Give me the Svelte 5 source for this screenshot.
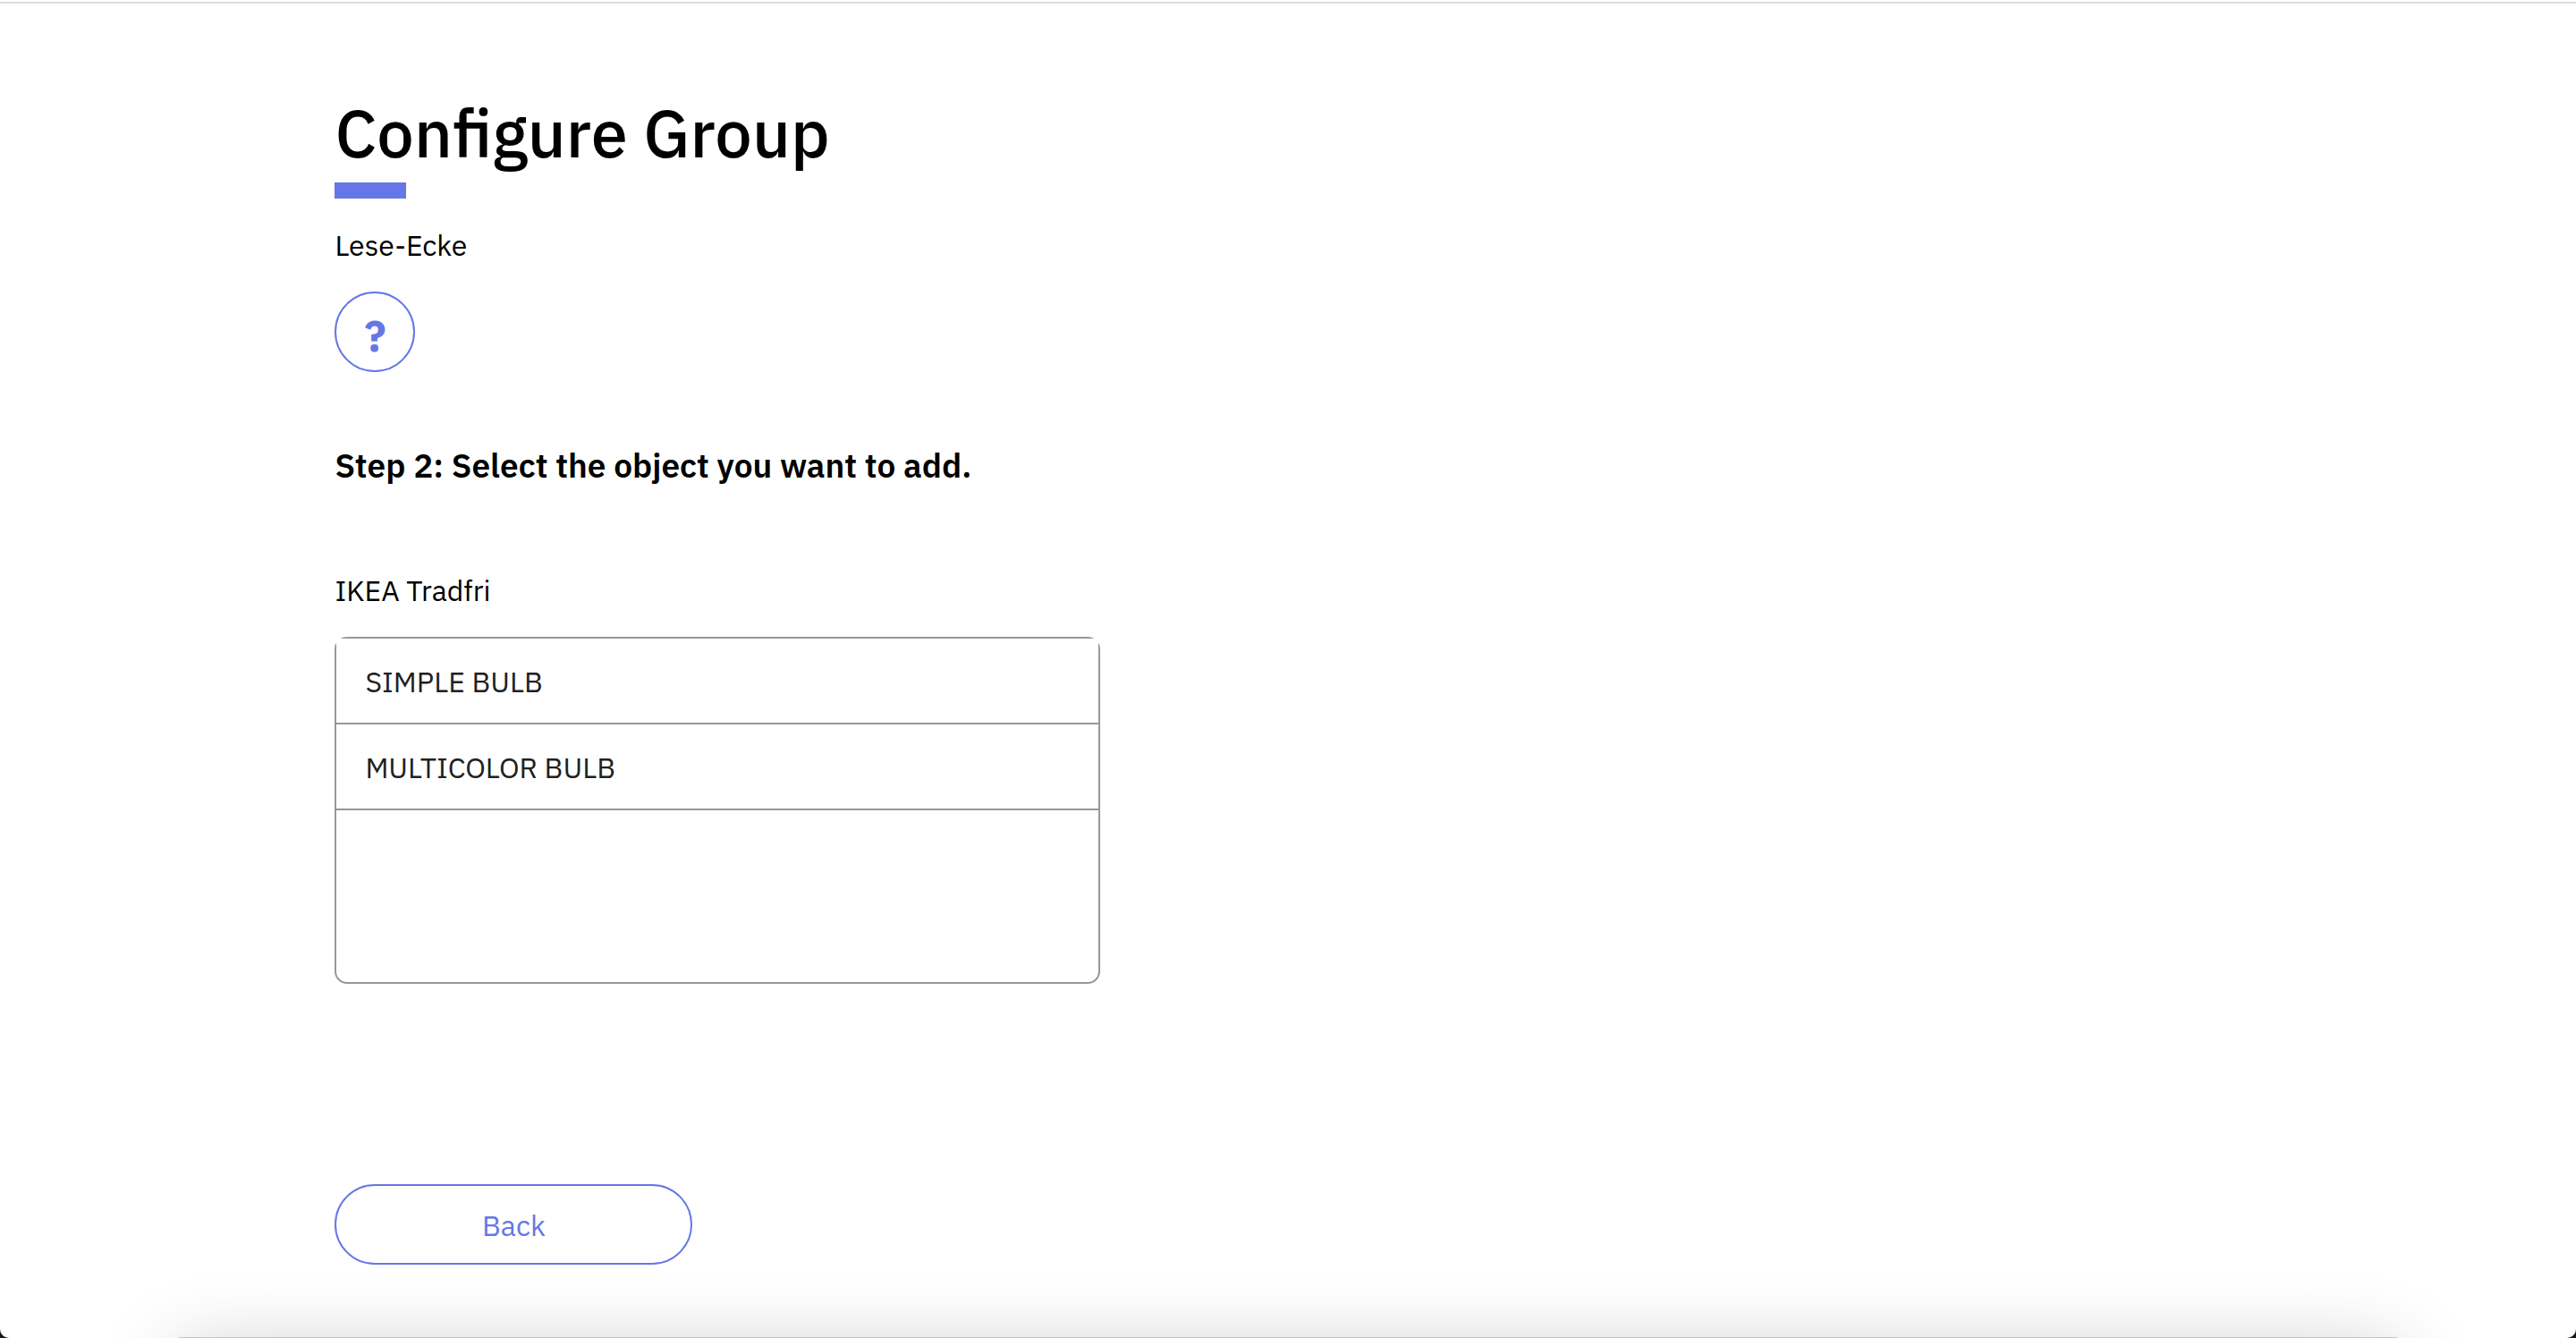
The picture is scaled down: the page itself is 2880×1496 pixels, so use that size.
<script>
  const group = 'Lese-Ecke';
  const gateway = 'IKEA Tradfri';
  const objects = ['Simple bulb', 'Multicolor bulb'];
</script>

<div class="window">
  <main>
    <header>
      <h1>Configure Group</h1>
      <p>{group}</p>
      <button class="help" type="button" aria-label="Help">?</button>
    </header>

    <h2>Step 2: Select the object you want to add.</h2>

    <section aria-labelledby="gateway">
      <h3 id="gateway">{gateway}</h3>
      <ul>
        {#each objects as name}
          <li><button class="item" type="button">{name}</button></li>
        {/each}
      </ul>
    </section>

    <button class="back" type="button">Back</button>
  </main>
  <div class="dock-shadow" aria-hidden="true"></div>
</div>

<style>
  :global(body) {
    margin: 0;
    background: #1d1518;
  }

  .window {
    position: relative;
    box-sizing: border-box;
    min-height: 100vh;
    padding-top: 2px;
    overflow: hidden;
    border-radius: 0 0 10px 10px;
    background: #fff;
    color: #000;
    font-family: "IBM Plex Sans", Roboto, "Liberation Sans", sans-serif;
    font-size: 32px;
    line-height: 40px;
  }

  main {
    display: flex;
    flex-direction: column;
    align-items: flex-start;
    padding: 96px 13% 80px;
    border-top: 2px solid #dcdce4;
  }

  header {
    display: flex;
    flex-direction: column;
    align-items: flex-start;
  }

  h1,
  h2,
  h3,
  p,
  ul {
    margin: 0;
    padding: 0;
  }

  h1 {
    font-size: 74px;
    font-weight: 500;
    line-height: 96px;
  }

  h1::after {
    content: "";
    display: block;
    width: 80px;
    height: 18px;
    margin-top: 8px;
    background: #6577e6;
  }

  p {
    margin-top: 32px;
  }

  button {
    box-sizing: border-box;
    padding: 2px 0 0;
    background: none;
    font: inherit;
    cursor: pointer;
  }

  .help {
    width: 90px;
    height: 90px;
    margin-top: 32px;
    padding-top: 8px;
    border: 2px solid #6577e6;
    border-radius: 50%;
    color: #6577e6;
    font-size: 48px;
    font-weight: 700;
  }

  h2 {
    margin-top: 80px;
    font-size: 37px;
    font-weight: 600;
    line-height: 48px;
  }

  section {
    width: 100%;
    max-width: 856px;
    margin-top: 96px;
  }

  h3 {
    font-size: 32px;
    font-weight: 400;
  }

  ul {
    box-sizing: border-box;
    min-height: 388px;
    margin-top: 32px;
    border: 2px solid #979797;
    border-radius: 14px;
    list-style: none;
  }

  .item {
    display: block;
    width: 100%;
    height: 96px;
    padding: 2px 32px 0;
    border: 0;
    border-bottom: 2px solid #979797;
    background: #fff;
    color: #212121;
    text-align: left;
    text-transform: uppercase;
  }

  .back {
    width: 400px;
    height: 90px;
    margin-top: 224px;
    border: 2px solid #6577e6;
    border-radius: 45px;
    color: #6577e6;
  }

  .dock-shadow {
    position: absolute;
    right: 198px;
    bottom: -199px;
    left: 198px;
    height: 200px;
    border-radius: 4px;
    background: #c4c4c4;
    box-shadow: 0 20px 90px rgba(0, 0, 0, 0.24);
    pointer-events: none;
  }
</style>
